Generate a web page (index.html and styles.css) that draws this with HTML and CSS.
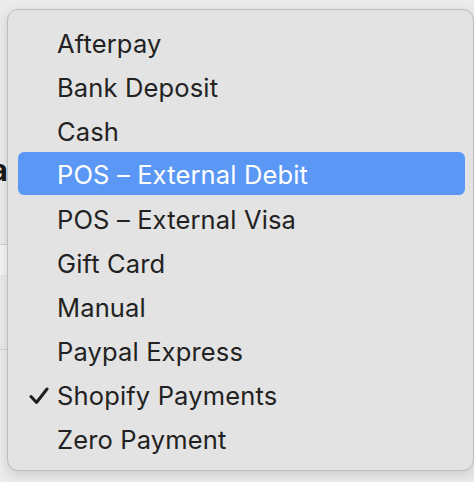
FILE: index.html
```html
<!DOCTYPE html>
<html>
<head>
<meta charset="utf-8">
<link rel="stylesheet" href="styles.css">
</head>
<body>
<div class="backdrop">
  <div class="bg-top"><div class="bg-clip"><span class="bg-title">Payment method via</span></div></div>
  <div class="bg-band"></div>
  <div class="bg-mid"></div>
  <div class="bg-bottom"></div>
</div>
<div class="menu">
  <div class="item">Afterpay</div>
  <div class="item">Bank Deposit</div>
  <div class="item">Cash</div>
  <div class="item active">POS – External Debit</div>
  <div class="item">POS – External Visa</div>
  <div class="item">Gift Card</div>
  <div class="item">Manual</div>
  <div class="item">Paypal Express</div>
  <div class="item checked"><svg class="check" viewBox="0 0 20 18" width="20" height="18"><path d="M2 9.5 L7.5 15.5 L18 2" fill="none" stroke="#1f1f1f" stroke-width="3" stroke-linecap="round" stroke-linejoin="round"/></svg>Shopify Payments</div>
  <div class="item">Zero Payment</div>
</div>
</body>
</html>
```
FILE: styles.css
```css
html, body {
  margin: 0;
  padding: 0;
}
body {
  width: 474px;
  height: 482px;
  overflow: hidden;
  background: #ececec;
  font-family: Inter, "Noto Sans", "Liberation Sans", sans-serif;
  position: relative;
}
.backdrop {
  width: 474px;
  display: flex;
  flex-direction: column;
}
.bg-top {
  height: 244px;
  border-bottom: 1px solid #cfcfcf;
  background: #ebebeb;
  display: flex;
  flex-direction: column;
  justify-content: flex-start;
}
.bg-clip {
  margin-top: 152px;
  width: 8px;
  overflow: hidden;
  display: flex;
  justify-content: flex-end;
}
.bg-title {
  font-size: 30px;
  font-weight: 700;
  color: #1a1a1a;
  white-space: nowrap;
}
.bg-band {
  height: 30px;
  background: #f5f5f5;
}
.bg-mid {
  height: 74px;
  border-bottom: 1px solid #d3d3d3;
  background: #ebebeb;
}
.bg-bottom {
  height: 133px;
  background: #ececec;
}
.menu {
  position: absolute;
  left: 7px;
  top: 9px;
  width: 467px;
  height: 462px;
  box-sizing: border-box;
  background: #e3e3e3;
  border: 1px solid #bdbdbd;
  border-radius: 11px;
  box-shadow: 0 4px 12px rgba(0, 0, 0, 0.14);
  padding: 10px 8px 10px 10px;
  display: flex;
  flex-direction: column;
}
.item {
  height: 44px;
  display: flex;
  align-items: center;
  padding-left: 39px;
  padding-top: 2px;
  box-sizing: border-box;
  font-size: 25.5px;
  color: #222222;
  border-radius: 6px;
  position: relative;
  letter-spacing: 0.15px;
}
.item.active {
  background: #5b98f6;
  color: #ffffff;
  height: 43px;
  margin-bottom: 1px;
}
.check {
  position: absolute;
  left: 11px;
  top: 15px;
}
```
